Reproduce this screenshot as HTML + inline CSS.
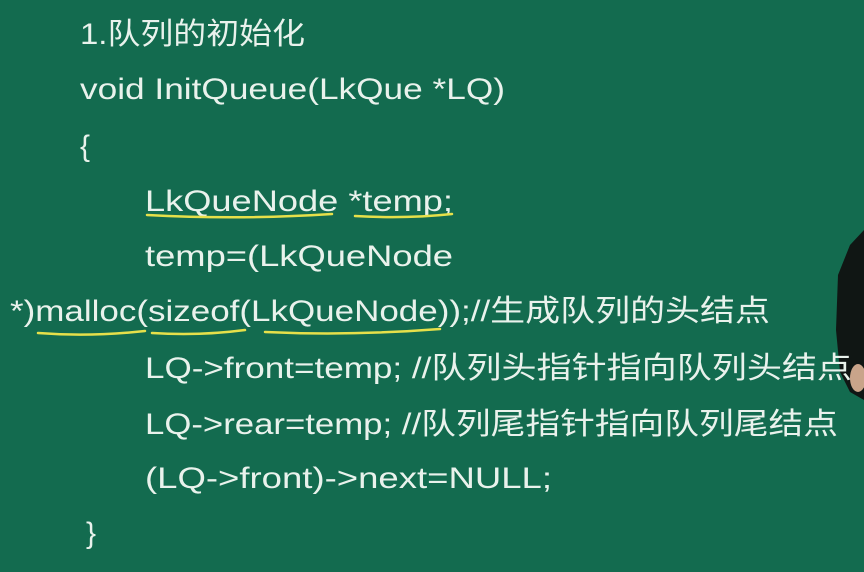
<!DOCTYPE html>
<html><head><meta charset="utf-8"><style>
html,body{margin:0;padding:0;width:864px;height:572px;overflow:hidden;background:#136b4f}
svg{display:block}
text{font-family:"Liberation Sans","Noto Sans CJK SC",sans-serif;font-size:30px;fill:#e9f2ec}
</style></head><body>
<svg width="864" height="572" viewBox="0 0 864 572">
<rect width="864" height="572" fill="#136b4f"/>
<path d="M864 230 L850 245 L838 275 L836 330 L840 372 L850 392 L864 400 Z" fill="#101614"/>
<ellipse cx="858" cy="378" rx="8" ry="14" fill="#c9a48a"/>
<text x="80" y="44" textLength="225" lengthAdjust="spacingAndGlyphs">1.队列的初始化</text>
<text x="80" y="99" textLength="425" lengthAdjust="spacingAndGlyphs">void InitQueue(LkQue *LQ)</text>
<text x="80" y="156">{</text>
<text x="145" y="211" textLength="308" lengthAdjust="spacingAndGlyphs">LkQueNode *temp;</text>
<text x="145" y="266" textLength="308" lengthAdjust="spacingAndGlyphs">temp=(LkQueNode</text>
<text x="10" y="321" textLength="760" lengthAdjust="spacingAndGlyphs">*)malloc(sizeof(LkQueNode));//生成队列的头结点</text>
<text x="145" y="378" textLength="707" lengthAdjust="spacingAndGlyphs">LQ-&gt;front=temp; //队列头指针指向队列头结点</text>
<text x="145" y="434" textLength="693" lengthAdjust="spacingAndGlyphs">LQ-&gt;rear=temp; //队列尾指针指向队列尾结点</text>
<text x="145" y="488" textLength="407" lengthAdjust="spacingAndGlyphs">(LQ-&gt;front)-&gt;next=NULL;</text>
<text x="86" y="543">}</text>
<g stroke="#e6e04a" stroke-width="2.5" fill="none" stroke-linecap="round">
<path d="M147 215 Q240 220 332 214"/>
<path d="M355 216 Q405 219 452 214"/>
<path d="M38 333 Q90 337 145 331"/>
<path d="M152 333 Q200 336 245 330"/>
<path d="M265 332 Q350 336 440 329"/>
</g>
</svg>
</body></html>
